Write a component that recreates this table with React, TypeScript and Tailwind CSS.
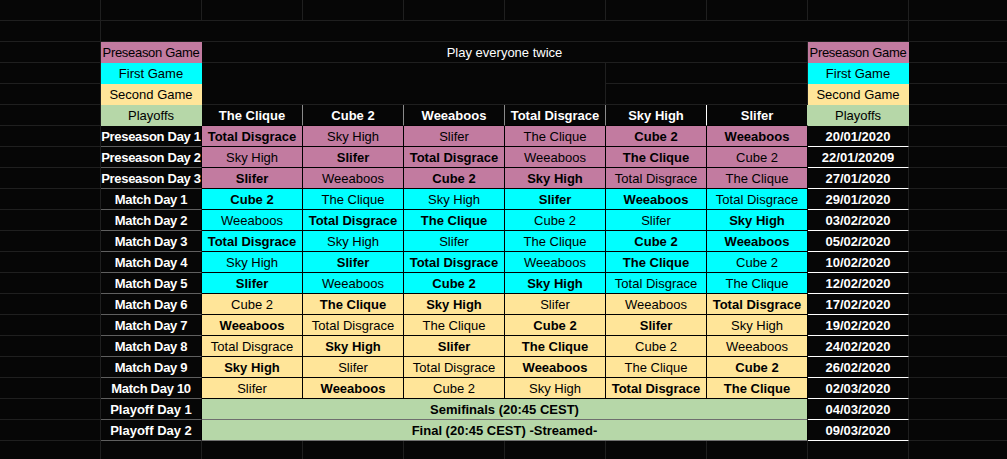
import React from "react";

const PINK = "bg-[#c27ba0]";
const CYAN = "bg-[#00ffff]";
const YELLOW = "bg-[#ffe599]";
const GREEN = "bg-[#b6d7a8]";

const TEAMS = ["The Clique", "Cube 2", "Weeaboos", "Total Disgrace", "Sky High", "Slifer"];

// [label, date, colour, games] — a leading "*" marks a bold (home) entry
const DAYS: [string, string, string, string[]][] = [
  ["Preseason Day 1", "20/01/2020", PINK, ["*Total Disgrace", "Sky High", "Slifer", "The Clique", "*Cube 2", "*Weeaboos"]],
  ["Preseason Day 2", "22/01/20209", PINK, ["Sky High", "*Slifer", "*Total Disgrace", "Weeaboos", "*The Clique", "Cube 2"]],
  ["Preseason Day 3", "27/01/2020", PINK, ["*Slifer", "Weeaboos", "*Cube 2", "*Sky High", "Total Disgrace", "The Clique"]],
  ["Match Day 1", "29/01/2020", CYAN, ["*Cube 2", "The Clique", "Sky High", "*Slifer", "*Weeaboos", "Total Disgrace"]],
  ["Match Day 2", "03/02/2020", CYAN, ["Weeaboos", "*Total Disgrace", "*The Clique", "Cube 2", "Slifer", "*Sky High"]],
  ["Match Day 3", "05/02/2020", CYAN, ["*Total Disgrace", "Sky High", "Slifer", "The Clique", "*Cube 2", "*Weeaboos"]],
  ["Match Day 4", "10/02/2020", CYAN, ["Sky High", "*Slifer", "*Total Disgrace", "Weeaboos", "*The Clique", "Cube 2"]],
  ["Match Day 5", "12/02/2020", CYAN, ["*Slifer", "Weeaboos", "*Cube 2", "*Sky High", "Total Disgrace", "The Clique"]],
  ["Match Day 6", "17/02/2020", YELLOW, ["Cube 2", "*The Clique", "*Sky High", "Slifer", "Weeaboos", "*Total Disgrace"]],
  ["Match Day 7", "19/02/2020", YELLOW, ["*Weeaboos", "Total Disgrace", "The Clique", "*Cube 2", "*Slifer", "Sky High"]],
  ["Match Day 8", "24/02/2020", YELLOW, ["Total Disgrace", "*Sky High", "*Slifer", "*The Clique", "Cube 2", "Weeaboos"]],
  ["Match Day 9", "26/02/2020", YELLOW, ["*Sky High", "Slifer", "Total Disgrace", "*Weeaboos", "The Clique", "*Cube 2"]],
  ["Match Day 10", "02/03/2020", YELLOW, ["Slifer", "*Weeaboos", "Cube 2", "Sky High", "*Total Disgrace", "*The Clique"]],
];

const PLAYOFFS = [
  ["Playoff Day 1", "Semifinals (20:45 CEST)", "04/03/2020"],
  ["Playoff Day 2", "Final (20:45 CEST) -Streamed-", "09/03/2020"],
];

function Cell({ className = "", children }: { className?: string; children?: React.ReactNode }) {
  return (
    <div
      className={`flex items-center justify-center overflow-hidden whitespace-nowrap border-r border-b pt-[2px] leading-[18px] ${className}`}
    >
      {children}
    </div>
  );
}

const empty = "border-[#1f1f1f]";

function Blank() {
  return <Cell className={empty} />;
}

export default function App() {
  return (
    <div className="h-[459px] w-[1007px] overflow-hidden bg-[#060606] font-['Liberation_Sans',Arial,sans-serif] text-[13px]">
      <div className="grid grid-cols-[repeat(10,101px)] grid-rows-[repeat(22,21px)]">
        {/* row 0 */}
        {Array.from({ length: 10 }, (_, i) => (
          <Blank key={`r0-${i}`} />
        ))}

        {/* row 1 */}
        <Blank />
        <Cell className={`col-span-8 ${empty}`} />
        <Blank />

        {/* row 2 */}
        <Blank />
        <Cell className={`${PINK} border-[#c27ba0] tracking-[-0.3px] text-black`}>Preseason Game</Cell>
        <Cell className={`col-span-6 text-white ${empty}`}>Play everyone twice</Cell>
        <Cell className={`${PINK} border-[#c27ba0] tracking-[-0.3px] text-black`}>Preseason Game</Cell>
        <Blank />

        {/* row 3 */}
        <Blank />
        <Cell className={`${CYAN} border-[#00ffff] text-black`}>First Game</Cell>
        <Cell className={`col-span-4 row-span-2 ${empty}`} />
        <Cell className={`col-span-2 ${empty}`} />
        <Cell className={`${CYAN} border-[#00ffff] text-black`}>First Game</Cell>
        <Blank />

        {/* row 4 */}
        <Blank />
        <Cell className={`${YELLOW} border-[#ffe599] text-black`}>Second Game</Cell>
        <Cell className={`col-span-2 ${empty}`} />
        <Cell className={`${YELLOW} border-[#ffe599] text-black`}>Second Game</Cell>
        <Blank />

        {/* row 5 — team header */}
        <Blank />
        <Cell className={`${GREEN} border-[#b6d7a8] text-black`}>Playoffs</Cell>
        {TEAMS.map((t, i) => (
          <Cell
            key={t}
            className={`border-b-black font-bold text-white ${
              i === 4 ? "border-r-white" : i === 5 ? "border-r-[#b6d7a8]" : "border-r-[#8a8a8a]"
            }`}
          >
            {t}
          </Cell>
        ))}
        <Cell className={`${GREEN} border-[#b6d7a8] text-black`}>Playoffs</Cell>
        <Blank />

        {DAYS.map(([label, date, colour, games]) => (
          <React.Fragment key={label}>
            <Blank />
            <Cell className="border-r-black border-b-[#5f5f5f] font-bold tracking-[-0.3px] text-white">{label}</Cell>
            {games.map((g, j) => (
              <Cell
                key={j}
                className={`${colour} border-black text-black ${g.startsWith("*") ? "font-bold" : ""}`}
              >
                {g.replace("*", "")}
              </Cell>
            ))}
            <Cell className="border-r-[#1f1f1f] border-b-white font-bold text-white">{date}</Cell>
            <Blank />
          </React.Fragment>
        ))}

        {PLAYOFFS.map(([label, text, date]) => (
          <React.Fragment key={label}>
            <Blank />
            <Cell className="border-r-black border-b-[#5f5f5f] font-bold text-white">{label}</Cell>
            <Cell className={`col-span-6 ${GREEN} border-r-black border-b-[#6f6f6f] font-bold text-black`}>
              {text}
            </Cell>
            <Cell className="border-r-[#1f1f1f] border-b-white font-bold text-white">{date}</Cell>
            <Blank />
          </React.Fragment>
        ))}

        {/* last row */}
        {Array.from({ length: 10 }, (_, i) => (
          <Blank key={`r21-${i}`} />
        ))}
      </div>
    </div>
  );
}
